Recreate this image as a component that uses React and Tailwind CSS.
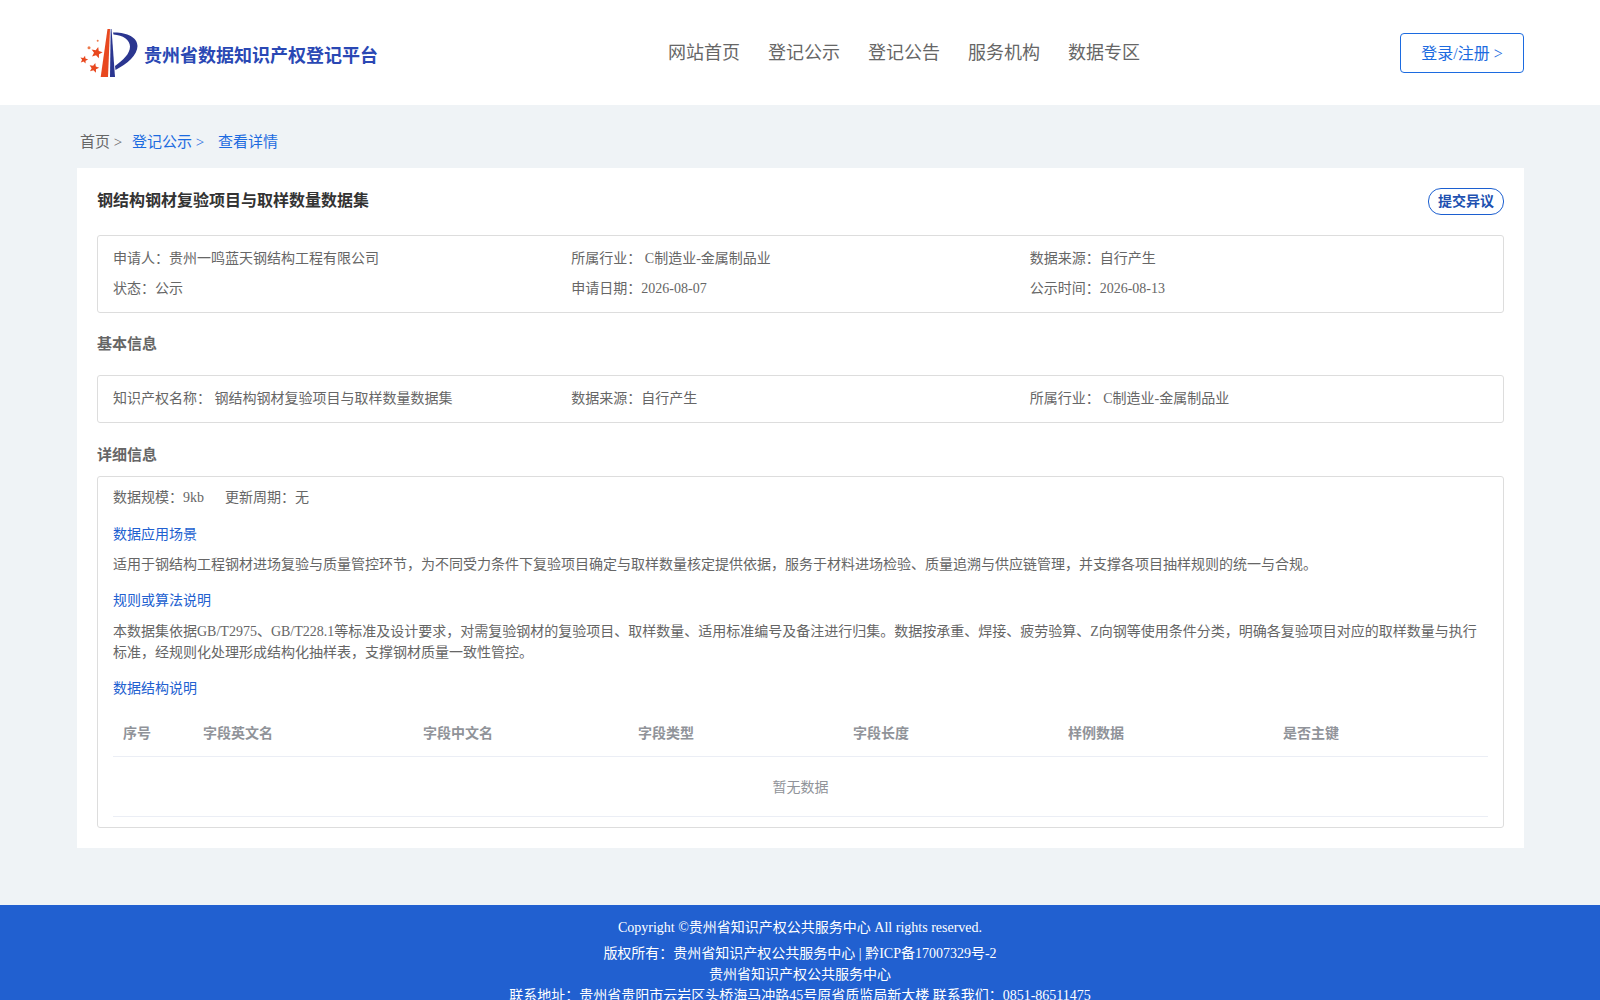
import React from 'react';

const navItems = ['网站首页', '登记公示', '登记公告', '服务机构', '数据专区'];
const columns = ['序号', '字段英文名', '字段中文名', '字段类型', '字段长度', '样例数据', '是否主键'];

const Star = ({ x, y, r }) => {
  const points = [];
  for (let i = 0; i < 10; i++) {
    const radius = i % 2 === 0 ? r : r * 0.45;
    const angle = -Math.PI / 2 + (i * Math.PI) / 5 + 0.25;
    points.push(`${x + radius * Math.cos(angle)},${y + radius * Math.sin(angle)}`);
  }
  return <polygon points={points.join(' ')} fill="#e8481f" />;
};

const Logo = () => (
  <svg width="60" height="52" viewBox="0 0 60 52" className="shrink-0">
    <Star x={16.7} y={24.7} r={6} />
    <Star x={4} y={31.7} r={4.2} />
    <Star x={14} y={40} r={5.2} />
    <circle cx="9" cy="19.7" r="1.5" fill="#ec7a4c" />
    <circle cx="17.7" cy="12.7" r="1" fill="#ec7a4c" />
    <path d="M27.5 1 L30 1 L28 49 L20.7 49 Z" fill="#e8481f" />
    <path d="M30.7 1 L31.5 1 L35 49 L30 49 Z" fill="#2b3690" />
    <path d="M33 4.5 C46 4 57.5 9 57.5 18 C57.5 27 47 36 35.5 42 L35 38 C43 32 50 26 50 18.5 C50 12 43 7 33.5 6.5 Z" fill="#2b3690" />
  </svg>
);

const Field = ({ children }) => <div className="leading-[30px]">{children}</div>;

const SubTitle = ({ children }) => (
  <h4 className="text-[14px] leading-[21px] font-normal text-[#2160d0]">{children}</h4>
);

export default function App() {
  return (
    <div className='font-["Liberation_Serif","Noto_Sans_CJK_SC",serif] bg-[#eff3f6] text-[14px] text-[#666]'>
      {/* Header */}
      <header className="h-[105px] bg-white flex items-center pl-[80px] pr-[76px]">
        <div className="w-[588px] flex items-center gap-[4px] mt-[2px]">
          <Logo />
          <span className="text-[18px] font-bold text-[#2a48b4] whitespace-nowrap mt-[6px]">贵州省数据知识产权登记平台</span>
        </div>
        <nav className="flex gap-[28px] text-[18px] text-[#666] mt-[2px]">
          {navItems.map(item => (
            <a key={item} className="whitespace-nowrap">{item}</a>
          ))}
        </nav>
        <button className="ml-auto w-[124px] h-[40px] pt-[2px] border border-[#1c6be0] rounded text-[16px] text-[#1c6be0] bg-white">
          登录/注册 &gt;
        </button>
      </header>

      <main className="pl-[77px] pr-[76px] pb-[57px]">
        {/* Breadcrumb */}
        <div className="h-[63px] flex items-center pl-[3px] pt-[12px] text-[15px]">
          <span className="w-[52px]">首页 &gt;</span>
          <span className="w-[86px] text-[#1c6be0]">登记公示 &gt;</span>
          <span className="text-[#1c6be0]">查看详情</span>
        </div>

        <section className="bg-white px-5 pt-5 pb-[20px]">
          <div className="flex justify-between items-start h-[47px]">
            <h2 className="text-[16px] font-bold leading-6 text-[#333] mt-[1px]">钢结构钢材复验项目与取样数量数据集</h2>
            <button className="w-[76px] h-[27px] border border-[#1c5fd0] rounded-[13px] text-[14px] font-bold text-[#2050b0] bg-white">提交异议</button>
          </div>

          <div className="border border-[#ddd] rounded-[3px] px-[15px] py-[8px] h-[78px] grid grid-cols-3">
            <Field>申请人：贵州一鸣蓝天钢结构工程有限公司</Field>
            <Field>所属行业： C制造业-金属制品业</Field>
            <Field>数据来源：自行产生</Field>
            <Field>状态：公示</Field>
            <Field>申请日期：2026-08-07</Field>
            <Field>公示时间：2026-08-13</Field>
          </div>

          <h3 className="text-[15px] font-bold leading-[24px] mt-[19px] mb-[19px]">基本信息</h3>

          <div className="border border-[#ddd] rounded-[3px] px-[15px] pb-[1px] h-[48px] grid grid-cols-3 items-center">
            <div>知识产权名称： 钢结构钢材复验项目与取样数量数据集</div>
            <div>数据来源：自行产生</div>
            <div>所属行业： C制造业-金属制品业</div>
          </div>

          <h3 className="text-[15px] font-bold leading-[24px] mt-[20px] mb-[9px]">详细信息</h3>

          <div className="border border-[#ddd] rounded-[3px] px-[15px] pt-[10px] pb-[10px]">
            <div className="flex gap-[21px] leading-[21px]">
              <span>数据规模：9kb</span>
              <span>更新周期：无</span>
            </div>

            <div className="mt-[16px]"><SubTitle>数据应用场景</SubTitle></div>
            <p className="mt-[9px] leading-[21px]">适用于钢结构工程钢材进场复验与质量管控环节，为不同受力条件下复验项目确定与取样数量核定提供依据，服务于材料进场检验、质量追溯与供应链管理，并支撑各项目抽样规则的统一与合规。</p>

            <div className="mt-[15px]"><SubTitle>规则或算法说明</SubTitle></div>
            <p className="mt-[10px] leading-[21px]">本数据集依据GB/T2975、GB/T228.1等标准及设计要求，对需复验钢材的复验项目、取样数量、适用标准编号及备注进行归集。数据按承重、焊接、疲劳验算、Z向钢等使用条件分类，明确各复验项目对应的取样数量与执行标准，经规则化处理形成结构化抽样表，支撑钢材质量一致性管控。</p>

            <div className="mt-[15px]"><SubTitle>数据结构说明</SubTitle></div>

            <div className="mt-[12px] grid grid-cols-[80px_220px_215px_215px_215px_215px_1fr] h-[46px] items-center border-b border-[#ebeef5] font-bold text-[#909399]">
              {columns.map(col => (
                <div key={col} className="pl-[10px]">{col}</div>
              ))}
            </div>
            <div className="h-[60px] pt-[2px] flex items-center justify-center border-b border-[#ebeef5] text-[#909399]">暂无数据</div>
          </div>
        </section>
      </main>

      {/* Footer */}
      <footer className="bg-[#2160d0] text-white text-center pt-[12px] pb-[20px]">
        <p className="leading-[21px] mb-[5px]">Copyright ©贵州省知识产权公共服务中心 All rights reserved.</p>
        <p className="leading-[21px]">版权所有：贵州省知识产权公共服务中心 | 黔ICP备17007329号-2</p>
        <p className="leading-[21px]">贵州省知识产权公共服务中心</p>
        <p className="leading-[21px]">联系地址：贵州省贵阳市云岩区头桥海马冲路45号原省质监局新大楼 联系我们：0851-86511475</p>
      </footer>
    </div>
  );
}
